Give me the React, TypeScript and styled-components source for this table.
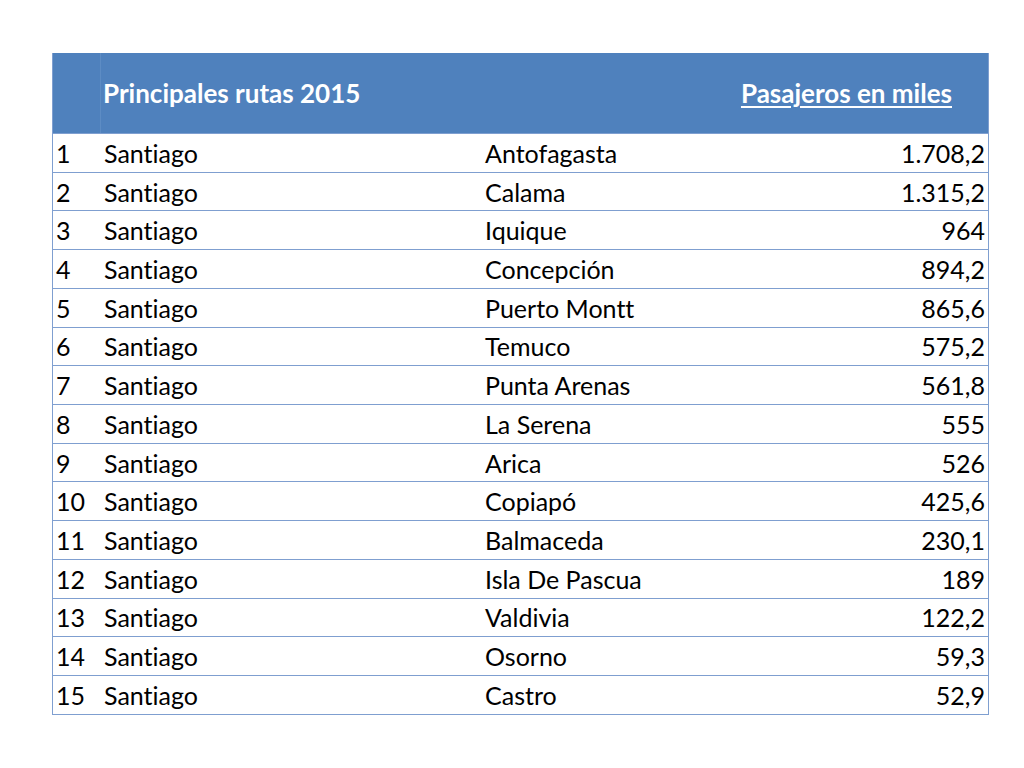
import styled, { createGlobalStyle } from "styled-components";

const GlobalStyle = createGlobalStyle`
  html, body {
    margin: 0;
    padding: 0;
    background: #ffffff;
  }
  body {
    font-family: Lato, "Open Sans", sans-serif;
    font-variant-ligatures: none;
  }
`;

type TRoute = { rank: number; from: string; to: string; passengers: string };

const routes: TRoute[] = [
  { rank: 1, from: "Santiago", to: "Antofagasta", passengers: "1.708,2" },
  { rank: 2, from: "Santiago", to: "Calama", passengers: "1.315,2" },
  { rank: 3, from: "Santiago", to: "Iquique", passengers: "964" },
  { rank: 4, from: "Santiago", to: "Concepción", passengers: "894,2" },
  { rank: 5, from: "Santiago", to: "Puerto Montt", passengers: "865,6" },
  { rank: 6, from: "Santiago", to: "Temuco", passengers: "575,2" },
  { rank: 7, from: "Santiago", to: "Punta Arenas", passengers: "561,8" },
  { rank: 8, from: "Santiago", to: "La Serena", passengers: "555" },
  { rank: 9, from: "Santiago", to: "Arica", passengers: "526" },
  { rank: 10, from: "Santiago", to: "Copiapó", passengers: "425,6" },
  { rank: 11, from: "Santiago", to: "Balmaceda", passengers: "230,1" },
  { rank: 12, from: "Santiago", to: "Isla De Pascua", passengers: "189" },
  { rank: 13, from: "Santiago", to: "Valdivia", passengers: "122,2" },
  { rank: 14, from: "Santiago", to: "Osorno", passengers: "59,3" },
  { rank: 15, from: "Santiago", to: "Castro", passengers: "52,9" },
];

const Page = styled.main`
  width: 1024px;
  height: 768px;
  padding-top: 53px;
  padding-left: 52px;
  box-sizing: border-box;
`;

const Table = styled.div`
  width: 937px;
  border: 1px solid #7f9fd0;
  border-top: none;
  box-sizing: border-box;
`;

const HeaderRow = styled.div`
  display: grid;
  grid-template-columns: 48px 381px 1fr;
  height: 80px;
  background: #4f81bd;
  color: #ffffff;
  font-weight: 700;
  font-size: 26px;
`;

const HeaderCell = styled.div<{ $right?: boolean; $divider?: boolean }>`
  display: flex;
  align-items: center;
  justify-content: ${(p) => (p.$right ? "flex-end" : "flex-start")};
  padding: ${(p) => (p.$right ? "0 36px 0 0" : "0 0 0 2px")};
  border-right: ${(p) => (p.$divider ? "1px solid #5d8cc4" : "none")};
  white-space: nowrap;
`;

const Underlined = styled.span`
  text-decoration: underline;
  text-underline-offset: 3px;
  text-decoration-thickness: 2px;
`;

const Row = styled.div`
  display: grid;
  grid-template-columns: 48px 381px 1fr 1fr;
  height: 38.73px;
  box-sizing: border-box;
  border-top: 1px solid #7f9fd0;
  font-size: 25px;
  color: #000000;
  align-items: center;
`;

const Cell = styled.div<{ $right?: boolean }>`
  padding: ${(p) => (p.$right ? "0 3px 0 0" : "0 0 0 3px")};
  text-align: ${(p) => (p.$right ? "right" : "left")};
  white-space: nowrap;
`;

export default function App() {
  return (
    <>
      <GlobalStyle />
      <Page>
        <Table>
          <HeaderRow>
            <HeaderCell $divider />
            <HeaderCell>Principales rutas 2015</HeaderCell>
            <HeaderCell $right>
              <Underlined>Pasajeros en miles</Underlined>
            </HeaderCell>
          </HeaderRow>
          {routes.map((r) => (
            <Row key={r.rank}>
              <Cell>{r.rank}</Cell>
              <Cell>{r.from}</Cell>
              <Cell>{r.to}</Cell>
              <Cell $right>{r.passengers}</Cell>
            </Row>
          ))}
        </Table>
      </Page>
    </>
  );
}
